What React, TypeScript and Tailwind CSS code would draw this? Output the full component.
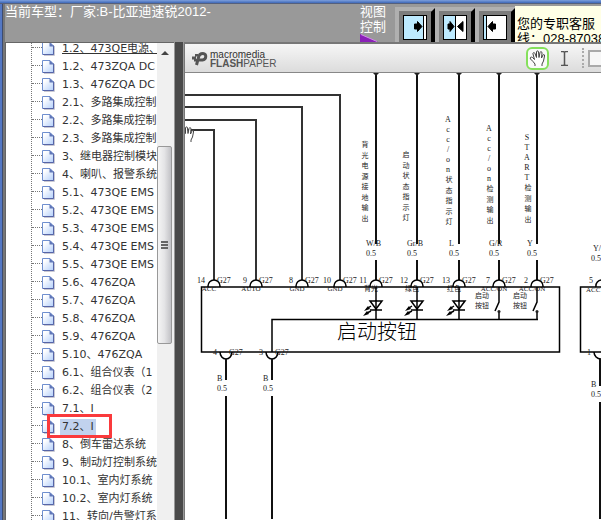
import React, { useState } from 'react';

const treeItems: string[] = [
  '1.2、473QE电源、',
  '1.2、473ZQA DC',
  '1.3、476ZQA DC',
  '2.1、多路集成控制',
  '2.2、多路集成控制',
  '2.3、多路集成控制',
  '3、继电器控制模块',
  '4、喇叭、报警系统',
  '5.1、473QE EMS',
  '5.2、473QE EMS',
  '5.3、473QE EMS',
  '5.4、473QE EMS',
  '5.5、473QE EMS',
  '5.6、476ZQA',
  '5.7、476ZQA',
  '5.8、476ZQA',
  '5.9、476ZQA',
  '5.10、476ZQA',
  '6.1、组合仪表（1',
  '6.2、组合仪表（2',
  '7.1、I',
  '7.2、I',
  '8、倒车雷达系统',
  '9、制动灯控制系统',
  '10.1、室内灯系统',
  '10.2、室内灯系统',
  '11、转向/告警灯系',
];

const PageIcon: React.FC = () => (
  <svg width="13" height="15" viewBox="0 0 13 15" className="mb-0.5 shrink-0">
    <defs>
      <linearGradient id="page" x1="0" y1="0" x2="1" y2="1">
        <stop offset="0.2" stopColor="#ffffff" />
        <stop offset="1" stopColor="#b4d0fb" />
      </linearGradient>
    </defs>
    <path d="M2 14.5H12.5V5" fill="none" stroke="#c9c9d2" />
    <path d="M0.5 1.5H8L11.5 5V13.5H0.5Z" fill="url(#page)" stroke="#6f8fcf" />
    <path d="M11.5 4.5V13.5H1" fill="none" stroke="#5665a8" />
    <path d="M7.5 1L12 5.5H7.5Z" fill="#5f76b8" />
  </svg>
);

const viewIcons = [
  { label: '展开目录', fill: 19, divider: 20, arrows: ['M11.5 9H14.5V6.500L19 11.500L14.500 16.500V14H11.500Z'] },
  { label: '平分视图', fill: 12, divider: 12, arrows: ['M5 9H7V6.500L11 11.500L7 16.500V14H5Z', 'M20 6.500V16.500L14.500 11.500Z'] },
  { label: '收起目录', fill: 3, divider: 3, arrows: ['M12.500 9H9.500V6.500L5 11.500L9.500 16.500V14H12.500Z'] },
];

const ViewButton: React.FC<{ icon: (typeof viewIcons)[number] }> = ({ icon }) => (
  <button type="button" aria-label={icon.label} className="block h-9 w-10 overflow-hidden">
    <svg width="40" height="36" viewBox="0 0 40 36">
      <rect width="40" height="36" fill="#b0b0b0" />
      <rect x="4" y="4" width="36" height="32" fill="#7c7c7c" />
      <path d="M40 1V36H36V5Z" fill="#000" />
      <g transform="translate(8 8)">
        <rect x="0.5" y="0.5" width="23" height="24" fill="#fff" stroke="#000" />
        <rect x="1" y="1" width={icon.fill} height="23" fill="#bdeaff" />
        <path d={`M${icon.divider + 0.5} 0V24`} stroke="#000" />
        {icon.arrows.map((d) => (
          <path key={d} d={d} fill="#000" stroke="#000" />
        ))}
      </g>
    </svg>
  </button>
);

const Header: React.FC = () => (
  <header className="flex h-[38px] shrink-0 overflow-hidden bg-[#999999] text-[13px]">
    <h1 className="min-w-0 flex-1 overflow-hidden whitespace-nowrap text-[13px] leading-4 text-white">
      当前车型：厂家:B-比亚迪速锐2012-
    </h1>
    <div className="w-[35px] shrink-0 leading-[15px] text-white">
      <div className="w-7">视图控制</div>
      <svg width="18" height="8" viewBox="0 0 18 8">
        <path d="M0 0L18 8H0Z" fill="#8a20b8" />
        <path d="M1 0.5L17 7.5" stroke="#d38be8" />
      </svg>
    </div>
    <div className="flex shrink-0 pt-[3px]">
      {viewIcons.map((icon) => (
        <ViewButton key={icon.label} icon={icon} />
      ))}
    </div>
    <p className="mt-0.5 w-[86px] shrink-0 whitespace-nowrap bg-[#ffffe6] pl-[2px] pt-[10px] leading-[15px] text-black">
      您的专职客服
      <br />
      线：028-87038
    </p>
  </header>
);

interface TreeProps {
  selected: number;
  onSelect: (index: number) => void;
}

const Tree: React.FC<TreeProps> = ({ selected, onSelect }) => (
  <nav className="min-w-0 flex-1 overflow-hidden">
    <ul className="-mt-[3px] ml-[25px] border-l border-dotted border-[#777] font-['DejaVu_Sans','Noto_Sans_CJK_SC',sans-serif] text-[11px] text-[#333]">
      {treeItems.map((item, i) => (
        <li key={i} className="relative flex h-[18px] items-center whitespace-nowrap">
          <span className="mb-[3px] w-[10px] shrink-0 border-t border-dotted border-[#777]" />
          <PageIcon />
          <a
            href="#diagram"
            onClick={() => onSelect(i)}
            className={`ml-[5px] h-4 pl-[2px] pr-[2px] leading-4 ${i === selected ? 'bg-[#c1d2ee]' : ''} ${i === 0 ? 'underline' : ''}`}
          >
            {item}
          </a>
          {i === selected && (
            <span className="pointer-events-none absolute -top-1 left-[15px] h-6 w-[65px] border-3 border-[#fa3a3c]" />
          )}
        </li>
      ))}
    </ul>
  </nav>
);

const ScrollBar: React.FC = () => (
  <div className="w-[17px] shrink-0 bg-[#f0f0f0]">
    <div className="flex h-[103px] justify-center pt-2">
      <svg width="9" height="5" viewBox="0 0 9 5">
        <path d="M4 0L8 4H0Z" fill="#444" />
      </svg>
    </div>
    <div className="flex h-[198px] w-[15px] items-center justify-center rounded-xs border border-[#999] bg-linear-to-r from-[#f5f5f5] via-[#e4e4e6] to-[#c2c2c6]">
      <div className="flex w-[7px] flex-col gap-px">
        <span className="h-0.5 bg-[#666]" />
        <span className="h-0.5 bg-[#666]" />
        <span className="h-0.5 bg-[#666]" />
      </div>
    </div>
  </div>
);

const HandShape: React.FC = () => (
  <path
    d="M6 17V15L4 12.500L1.500 10C0.500 8.500 2 7.500 3.500 8.500L5.500 10.500L4 5C3.500 3.500 5.500 3 6 4.500L7.500 8.500L7.500 3C7.500 1.500 9.500 1.500 9.500 3L10 8.500L11 3.500C11.500 2 13 2.500 13 4L12.500 9L14 6C14.500 5 16 5.500 15.500 7L14.500 12L13 15V17"
    fill="#fff"
    stroke="#444"
    strokeLinejoin="round"
  />
);

const Toolbar: React.FC = () => (
  <div className="flex h-[29px] shrink-0 items-center overflow-hidden border-b border-[#888] bg-linear-to-b from-[#f6f6f6] to-[#dcdcdc] pl-[7px]">
    <svg width="16" height="17" viewBox="0 0 16 17" className="shrink-0">
      <path d="M4.500 15L6.500 7.500C7 4.500 9 3.500 11 3.500C15 3.500 14.500 9.500 10.500 10H7" fill="none" stroke="#555" strokeWidth="3" />
      <path d="M0 6.500H4V9.500H0ZM3 4H6V6.500H3ZM2 9H5V11.500H2Z" fill="#555" />
    </svg>
    <div className="ml-[2px] mt-0.5 text-[10px] leading-[9px] text-[#555]">
      <div className="text-[#333]">macromedia</div>
      <div>
        <b>FLASH</b>PAPER
      </div>
    </div>
    <div className="ml-auto flex h-full w-[75px] shrink-0 items-center">
      <button type="button" aria-label="手形工具" className="flex h-[23px] w-[23px] shrink-0 items-center justify-center rounded-md border-2 border-[#85e05c] bg-[#fafafa]">
        <svg width="18" height="18" viewBox="0 0 18 18" className="shrink-0">
          <HandShape />
        </svg>
      </button>
      <button type="button" aria-label="文本选择" className="ml-[10px] shrink-0">
        <svg width="11" height="15" viewBox="0 0 11 15">
          <path d="M2 0.500H4.500L5.500 1.500L6.500 0.500H9M5.500 1.500V13.500M2 14.500H4.500L5.500 13.500L6.500 14.500H9" fill="none" stroke="#555" strokeWidth="1.500" />
        </svg>
      </button>
      <span className="ml-3 h-5 shrink-0 border-l-2 border-dotted border-[#aaa]" />
      <input aria-label="查找" className="ml-1 h-[17px] w-10 shrink-0 border-2 border-[#aaa] bg-[#f7f7f7]" />
    </div>
  </div>
);

const loopWires = [
  { x: 214, y: 130, pin: '14', name: 'ACC' },
  { x: 256, y: 120, pin: '9', name: 'AUTO' },
  { x: 302, y: 107, pin: '8', name: 'GND' },
  { x: 340, y: 95, pin: '10', name: 'GND' },
];

const signalWires = [
  { x: 376, pin: '11', name: '背光', color: 'W/B', kind: 'led', textX: 365, top: 144, latin: '', label: '背光电源接地输出' },
  { x: 417, pin: '12', name: '绿色', color: 'Gr/B', kind: 'led', textX: 406, top: 154, latin: '', label: '启动状态指示灯' },
  { x: 459, pin: '13', name: '红色', color: 'L', kind: 'led', textX: 448, top: 119, latin: 'Acc/on', label: '状态指示灯' },
  { x: 499, pin: '7', name: 'ACC/ON', color: 'G/R', kind: 'switch', textX: 489, top: 128, latin: 'Acc/on', label: '检测输出' },
  { x: 537, pin: '2', name: 'ACC/ON', color: 'Y', kind: 'switch', textX: 527, top: 137, latin: 'START', label: '检测输出' },
];

const Terminal: React.FC<{ x: number; pin: string; name: string }> = ({ x, pin, name }) => (
  <g>
    <path d={`M${x - 6} 287V286A6 6 0 0 1 ${x + 6} 286V287`} fill="none" stroke="#000" strokeWidth="1.500" />
    <text x={x - 9} y="283" textAnchor="end">{pin}</text>
    <text x={x + 3} y="283">G27</text>
    <text x={x - 5} y="291" textAnchor="middle" fontSize="7">{name}</text>
  </g>
);

const Led: React.FC<{ x: number }> = ({ x }) => (
  <g stroke="#000" strokeWidth="1.500">
    <path d={`M${x} 287V319`} />
    <path d={`M${x - 6} 301H${x + 6}L${x} 309Z`} fill="#fff" />
    <path d={`M${x} 300V310M${x - 6} 310H${x + 6}`} />
    <path d={`M${x - 5} 306L${x - 8} 308M${x - 5} 311L${x - 9} 313`} />
    <path d={`M${x - 12} 311L${x - 8} 306L${x - 6} 309ZM${x - 13} 316L${x - 9} 311L${x - 7} 314Z`} fill="#000" strokeWidth="0" />
  </g>
);

const Switch: React.FC<{ x: number }> = ({ x }) => (
  <g>
    <path d={`M${x} 287V302L${x - 4} 311M${x} 312V319`} fill="none" stroke="#000" strokeWidth="1.500" />
    <circle cx={x} cy="311.500" r="1.500" />
    <text x={x - 24} y="298" fontSize="7">启动</text>
    <text x={x - 24} y="308" fontSize="7">按钮</text>
  </g>
);

const VerticalLabel: React.FC<{ x: number; top: number; latin: string; label: string }> = ({ x, top, latin, label }) => {
  const letters = [...latin];
  const start = top + letters.length * 10;
  return (
    <g textAnchor="middle">
      {letters.map((c, i) => (
        <text key={i} x={x} y={top + 3 + i * 10}>{c}</text>
      ))}
      {[...label].map((c, i) => (
        <text key={i} x={x + (latin ? 1 : 0)} y={start + 3 + Math.round(i * 10.5)} fontSize="7">{c}</text>
      ))}
    </g>
  );
};

const Diagram: React.FC = () => (
  <svg
    id="diagram"
    width="416"
    height="446"
    viewBox="185 73 416 446"
    className="shrink-0 font-['Liberation_Serif','Noto_Sans_CJK_SC',serif]"
    fontSize="8"
    fill="#222"
  >
    <g fill="none" stroke="#333" strokeWidth="2">
      {loopWires.map((w) => (
        <path key={w.x} d={`M185 ${w.y}H${w.x}V280`} />
      ))}
    </g>
    {loopWires.map((w) => (
      <Terminal key={w.x} x={w.x} pin={w.pin} name={w.name} />
    ))}

    {signalWires.map((w) => (
      <g key={w.x}>
        <path d={`M${w.x} 73V244M${w.x} 260V280`} stroke="#111" strokeWidth="2" />
        <path d={`M${w.x - 3} 73H${w.x + 3}L${w.x} 76Z`} />
        <VerticalLabel x={w.textX} top={w.top} latin={w.latin} label={w.label} />
        <text x={w.x - 10} y="246">{w.color}</text>
        <text x={w.x - 10} y="256">0.5</text>
        <Terminal x={w.x} pin={w.pin} name={w.name} />
        {w.kind === 'led' ? <Led x={w.x} /> : <Switch x={w.x} />}
      </g>
    ))}

    <g fill="none" stroke="#000" strokeWidth="1.500">
      <rect x="201.500" y="287" width="358" height="65" />
      <path d="M272 352V319.500H538" />
      <path d="M601 287H580.500V352H601" />
    </g>
    <text x="337" y="339" fontSize="20" fontWeight="300" fill="#000">启动按钮</text>

    {[226, 272].map((x, i) => (
      <g key={x}>
        <path d={`M${x - 6} 352A6 7 0 0 0 ${x + 6} 352`} fill="none" stroke="#000" strokeWidth="1.500" />
        <path d={`M${x} 359V380M${x} 396V520`} stroke="#111" strokeWidth="2" />
        <text x={x - 13} y="355">{i === 0 ? '4' : '3'}</text>
        <text x={x + 3} y="355">G27</text>
        <text x={x - 9} y="381">B</text>
        <text x={x - 9} y="391">0.5</text>
      </g>
    ))}

    <text x="593" y="251">Y/</text>
    <text x="591" y="261">0.5</text>
    <text x="589" y="283">5</text>
    <text x="586" y="292" fontSize="7">ACC</text>
    <path d="M596 287A6 6 0 0 1 602 280M594 352A7 7 0 0 0 601 359" fill="none" stroke="#000" strokeWidth="1.500" />
    <path d="M600 359V386M600 402V520" stroke="#111" strokeWidth="2" />
    <text x="587" y="355">1</text>
    <text x="591" y="387">B</text>
    <text x="591" y="397">0.5</text>

    {/* pan cursor, half over the left edge */}
    <g transform="translate(178 125)">
      <HandShape />
    </g>
  </svg>
);

const App: React.FC = () => {
  const [selected, setSelected] = useState(21);

  return (
    <div className="flex h-screen flex-col overflow-hidden bg-[#999999] font-['Liberation_Sans','Noto_Sans_CJK_SC',sans-serif]">
      <div className="h-1 shrink-0 border-b border-[#55607c] bg-linear-to-b from-[#7d9fdc] to-[#3e68b8]" />
      <div className="flex min-h-0 flex-1">
        <div className="w-[5px] shrink-0 border-l-2 border-r-2 border-l-[#5478c4] border-r-[#777] bg-[#3d4c70]" />
        <div className="flex min-w-0 flex-1 flex-col">
          <Header />
          <div className="flex min-h-0 flex-1">
            <aside className="flex w-[169px] shrink-0 overflow-hidden border-l border-t border-[#666] bg-white">
              <Tree selected={selected} onSelect={setSelected} />
              <ScrollBar />
            </aside>
            <div className="ml-px w-2 shrink-0 bg-[#4a4a4a]" />
            <main className="ml-px flex min-w-0 flex-1 flex-col overflow-hidden border-l border-t-2 border-[#777] bg-white">
              <Toolbar />
              <Diagram />
            </main>
          </div>
        </div>
      </div>
    </div>
  );
};

export default App;
